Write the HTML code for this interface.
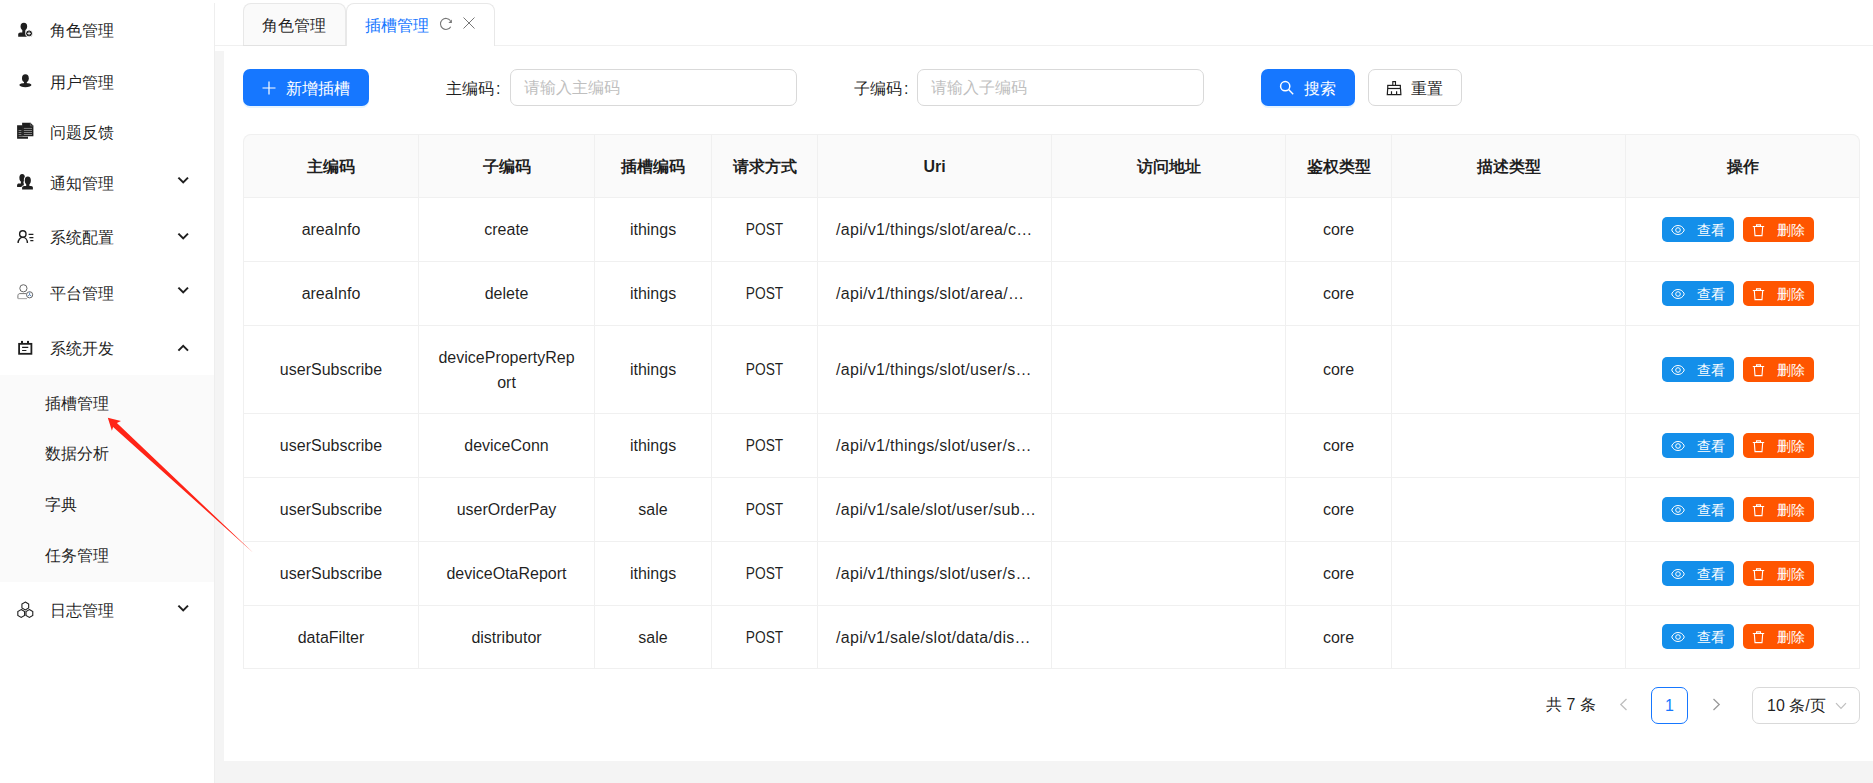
<!DOCTYPE html>
<html><head><meta charset="utf-8">
<style>
*{box-sizing:border-box;margin:0;padding:0}
html,body{width:1873px;height:783px;overflow:hidden;background:#fff;font-family:"Liberation Sans",sans-serif;color:rgba(0,0,0,.88)}
.abs{position:absolute}
#side{position:absolute;left:0;top:0;width:214px;height:783px;background:#fff}
#sbd{position:absolute;left:214px;top:3px;width:1px;height:780px;background:#eeeeee}
.mi{position:absolute;left:50px;font-size:16px;line-height:20px;white-space:nowrap}
.si{position:absolute;left:45px;font-size:16px;line-height:20px;white-space:nowrap}
#sub{position:absolute;left:0;top:375px;width:214px;height:207px;background:#fafafa}
#tabs{position:absolute;left:215px;top:0;width:1658px;height:46px;border-bottom:1px solid #f0f0f0;background:#fff}
.tab{position:absolute;top:3px;height:43px;border:1px solid #e8e8e8;border-bottom:none;border-radius:8px 8px 0 0;font-size:16px;line-height:20px;white-space:nowrap}
#gl{position:absolute;left:215px;top:51px;width:9px;height:732px;background:#f4f4f4}
#gb{position:absolute;left:215px;top:761px;width:1658px;height:22px;background:#f4f4f4}
.btn{position:absolute;border-radius:7px;font-size:16px;white-space:nowrap}
.inp{position:absolute;top:69px;height:37px;border:1px solid #d9d9d9;border-radius:7px;background:#fff}
.ph{position:absolute;left:13px;top:8px;font-size:16px;line-height:20px;color:#bfbfbf;white-space:nowrap}
.lbl{position:absolute;top:79px;font-size:16px;line-height:20px;white-space:nowrap}
.hl{position:absolute;height:1px;background:#f0f0f0}
.vl{position:absolute;width:1px;background:#f0f0f0}
.c{position:absolute;font-size:16px;line-height:20px;text-align:center;white-space:nowrap}
.h{font-weight:bold}
.vb{position:absolute;width:72px;height:25px;border-radius:5px;background:#148fea;color:#fff;font-size:14px}
.db{position:absolute;width:71px;height:25px;border-radius:5px;background:#ff5500;color:#fff;font-size:14px}

</style></head><body>
<div id="side"><div id="sub"></div>
<svg class="abs" style="left:14px;top:19px" width="22" height="22" viewBox="0 0 22 22">
<ellipse cx="9.85" cy="7.4" rx="3.3" ry="3.7" fill="#1f1f1f"/><rect x="8.3" y="9.5" width="3.1" height="4.5" fill="#1f1f1f"/>
<path d="M4.2 17.7V15.4C4.2 14.1 5 13.4 6.4 13.4H12.8V17.7Z" fill="#1f1f1f"/>
<circle cx="15.05" cy="14.4" r="3.5" fill="#1f1f1f" stroke="#fff" stroke-width="1"/>
<path d="M13.2 14.4h3.7M15.05 12.55v3.7" stroke="#fff" stroke-width=".9"/></svg>
<svg class="abs" style="left:14px;top:70px" width="22" height="22" viewBox="0 0 22 22">
<ellipse cx="11.4" cy="8.3" rx="3.4" ry="4.1" fill="#1f1f1f"/><rect x="10" y="11" width="2.8" height="3" fill="#1f1f1f"/>
<ellipse cx="11.4" cy="15.05" rx="6.05" ry="2.1" fill="#1f1f1f"/></svg>
<svg class="abs" style="left:14px;top:120px" width="22" height="22" viewBox="0 0 22 22">
<path d="M3.1 5.2H8.6V16.6H14V18.8H3.1Z" fill="#1f1f1f"/>
<path d="M8.1 2.8H16.5L19.4 5.7V16.3H8.1Z" fill="#1f1f1f"/>
<path d="M16.4 2.8V5.9H19.4" fill="none" stroke="#777" stroke-width=".7"/>
<path d="M9.8 8.4H18M9.8 10.5H18M9.8 12.5H18M9.8 14.5H18M4.6 10.5H7.4M4.6 12.5H7.4M4.6 14.5H7.4" stroke="#999" stroke-width=".8"/>
<path d="M4.6 16.45H14" stroke="#aaa" stroke-width=".6"/></svg>
<svg class="abs" style="left:14px;top:170px" width="22" height="22" viewBox="0 0 22 22">
<ellipse cx="8.15" cy="7.8" rx="2.8" ry="3.9" fill="#1f1f1f"/><rect x="6.9" y="10" width="2.6" height="4" fill="#1f1f1f"/>
<path d="M3.1 16.9V15.2C3.1 14.1 3.8 13.5 5 13.5H9.8V16.9Z" fill="#1f1f1f"/>
<path d="M7.4 20.1V17.6C7.4 16.2 8.4 15.3 10 15.3H11.3V13.5A4 4.6 0 1 1 16.3 13.5V15.3H16.6C18.3 15.3 19.5 16.2 19.5 17.6V20.1Z" fill="#fff"/>
<ellipse cx="13.8" cy="10.6" rx="3.05" ry="4" fill="#1f1f1f"/><rect x="12.2" y="13" width="3.2" height="3.5" fill="#1f1f1f"/>
<path d="M8.1 19.4V17.9C8.1 16.7 8.9 16 10.3 16H17C18.3 16 18.9 16.7 18.9 17.9V19.4Z" fill="#1f1f1f"/></svg>
<svg class="abs" style="left:14px;top:226px" width="22" height="22" viewBox="0 0 22 22">
<circle cx="8.8" cy="8" r="3.2" fill="none" stroke="#1f1f1f" stroke-width="1.4"/>
<path d="M4.1 17.1C4.1 13.6 6.2 11.4 8.75 11.4S13.4 13.6 13.4 17.1" fill="none" stroke="#1f1f1f" stroke-width="1.4"/>
<path d="M14.6 8.4H19.4M15.4 11.7H19.4M16.3 14.7H19.4" stroke="#1f1f1f" stroke-width="1.3"/></svg>
<svg class="abs" style="left:14px;top:281px" width="22" height="22" viewBox="0 0 22 22">
<circle cx="9.4" cy="7.3" r="3.6" fill="none" stroke="#666" stroke-width="1"/>
<path d="M12.3 12.6H6C4.7 12.6 3.9 13.4 3.9 14.7V17.5" fill="none" stroke="#777" stroke-width="1"/>
<path d="M3.9 17.6H13" stroke="#aaa" stroke-width="1.1"/>
<circle cx="15.6" cy="13.8" r="3.1" fill="none" stroke="#666" stroke-width="1"/>
<path d="M15.6 11.5v2.3M13.9 15l1.7-1.2 1.7 1.2" fill="none" stroke="#3a6fb0" stroke-width=".8"/></svg>
<svg class="abs" style="left:14px;top:337px" width="22" height="22" viewBox="0 0 22 22">
<rect x="5.1" y="6.85" width="12.3" height="9.95" fill="none" stroke="#1f1f1f" stroke-width="1.8"/>
<rect x="7" y="3.9" width="2" height="2.6" fill="#1f1f1f"/><rect x="13" y="3.9" width="2" height="2.6" fill="#1f1f1f"/>
<path d="M8.1 10.4H14.3M8.1 13.5H12.4" stroke="#1f1f1f" stroke-width="1.1"/></svg>
<svg class="abs" style="left:14px;top:598px" width="22" height="22" viewBox="0 0 22 22">
<path d="M11.30 4.10 L14.68 6.05 L14.68 9.95 L11.30 11.90 L7.92 9.95 L7.92 6.05ZM7.20 11.60 L10.58 13.55 L10.58 17.45 L7.20 19.40 L3.82 17.45 L3.82 13.55ZM15.40 11.60 L18.78 13.55 L18.78 17.45 L15.40 19.40 L12.02 17.45 L12.02 13.55Z" fill="none" stroke="#1f1f1f" stroke-width="1.1"/></svg>
<div class="mi" style="top:21.0px">角色管理</div>
<div class="mi" style="top:73.0px">用户管理</div>
<div class="mi" style="top:123.0px">问题反馈</div>
<div class="mi" style="top:173.5px">通知管理</div>
<div class="mi" style="top:228.3px">系统配置</div>
<div class="mi" style="top:283.7px">平台管理</div>
<div class="mi" style="top:339.3px">系统开发</div>
<div class="mi" style="top:601.0px">日志管理</div>
<div class="si" style="top:393.5px">插槽管理</div>
<div class="si" style="top:443.5px">数据分析</div>
<div class="si" style="top:495.0px">字典</div>
<div class="si" style="top:546.0px">任务管理</div>
<svg class="abs" style="left:177px;top:176.4px" width="12" height="8" viewBox="0 0 12 8"><path d="M1.4 1.6L6.2 6.4l4.8-4.8" fill="none" stroke="#1f1f1f" stroke-width="2"/></svg>
<svg class="abs" style="left:177px;top:231.6px" width="12" height="8" viewBox="0 0 12 8"><path d="M1.4 1.6L6.2 6.4l4.8-4.8" fill="none" stroke="#1f1f1f" stroke-width="2"/></svg>
<svg class="abs" style="left:177px;top:286.4px" width="12" height="8" viewBox="0 0 12 8"><path d="M1.4 1.6L6.2 6.4l4.8-4.8" fill="none" stroke="#1f1f1f" stroke-width="2"/></svg>
<svg class="abs" style="left:177px;top:343.8px" width="12" height="8" viewBox="0 0 12 8"><path d="M1.4 6.6L6.2 1.8l4.8 4.8" fill="none" stroke="#1f1f1f" stroke-width="2"/></svg>
<svg class="abs" style="left:177px;top:604.1px" width="12" height="8" viewBox="0 0 12 8"><path d="M1.4 1.6L6.2 6.4l4.8-4.8" fill="none" stroke="#1f1f1f" stroke-width="2"/></svg>
</div>
<div id="tabs"></div><div id="sbd"></div>
<div class="tab" style="left:243px;width:103px;height:42px;background:#fafafa"><span class="abs" style="left:18px;top:12px">角色管理</span></div>
<div class="abs" style="left:243px;top:45px;width:103px;height:1px;background:#e2e2e2"></div><div class="tab" style="left:346px;width:149px;background:#fff;height:43px;color:#1677ff"><span class="abs" style="left:18px;top:12px">插槽管理</span><svg class="abs" style="left:92px;top:13px" width="14" height="14" viewBox="0 0 14 14"><path d="M11.5 3.75A5.5 5.5 0 1 0 11.76 9.65" fill="none" stroke="#777" stroke-width="1.05"/><path d="M12.9 2.4V6H9.4z" fill="#777"/></svg><svg class="abs" style="left:115px;top:12px" width="14" height="14" viewBox="0 0 14 14"><path d="M1.5 1.5l11 11M12.5 1.5l-11 11" stroke="#777" stroke-width="1"/></svg></div>
<div id="gl"></div><div id="gb"></div>
<div class="btn" style="left:243px;top:69px;width:126px;height:37px;background:#1677ff;color:#fff;box-shadow:0 2px 0 rgba(5,145,255,.1)"><svg class="abs" style="left:19px;top:12px" width="14" height="14" viewBox="0 0 14 14"><path d="M7 .5v13M.5 7h13" stroke="#fff" stroke-width="1.2"/></svg><span class="abs" style="left:43px;top:10px;line-height:20px">新增插槽</span></div>
<div class="lbl" style="left:446px">主编码<span style="margin-left:2px">:</span></div>
<div class="inp" style="left:510px;width:287px"><span class="ph">请输入主编码</span></div>
<div class="lbl" style="left:854px">子编码<span style="margin-left:2px">:</span></div>
<div class="inp" style="left:917px;width:287px"><span class="ph">请输入子编码</span></div>
<div class="btn" style="left:1261px;top:69px;width:94px;height:37px;background:#1677ff;color:#fff;box-shadow:0 2px 0 rgba(5,145,255,.1)"><svg class="abs" style="left:18px;top:11px" width="15" height="15" viewBox="0 0 15 15"><circle cx="6.2" cy="6.2" r="4.6" fill="none" stroke="#fff" stroke-width="1.5"/><path d="M9.6 9.6l4.6 4.6" stroke="#fff" stroke-width="1.4"/></svg><span class="abs" style="left:43px;top:10px;line-height:20px">搜索</span></div>
<div class="btn" style="left:1368px;top:69px;width:94px;height:37px;background:#fff;border:1px solid #d9d9d9"><svg class="abs" style="left:17px;top:11px" width="16" height="15" viewBox="0 0 16 15"><path d="M6.8 4.3V.6H9.5V4.3" fill="none" stroke="#1f1f1f" stroke-width="1.1"/><rect x="1.75" y="4.4" width="12.6" height="3.1" fill="none" stroke="#1f1f1f" stroke-width="1.2"/><path d="M1.7 7.5L1.3 13.6H14.9L14.5 7.5M5.5 13.6V10.2M10.6 13.6V10.2" fill="none" stroke="#1f1f1f" stroke-width="1.2"/></svg><span class="abs" style="left:42px;top:9px;line-height:20px">重置</span></div>
<div id="tblbg" class="abs" style="left:243px;top:134px;width:1617px;height:63px;background:#fafafa;border-radius:8px 8px 0 0"></div>
<div class="abs" style="left:243px;top:134px;width:1617px;height:535px;border:1px solid #f0f0f0;border-bottom:none;border-radius:8px 8px 0 0"></div>
<div class="hl" style="left:243px;top:197px;width:1617px"></div>
<div class="hl" style="left:243px;top:261px;width:1617px"></div>
<div class="hl" style="left:243px;top:325px;width:1617px"></div>
<div class="hl" style="left:243px;top:413px;width:1617px"></div>
<div class="hl" style="left:243px;top:477px;width:1617px"></div>
<div class="hl" style="left:243px;top:541px;width:1617px"></div>
<div class="hl" style="left:243px;top:605px;width:1617px"></div>
<div class="hl" style="left:243px;top:668px;width:1617px"></div>
<div class="vl" style="left:418px;top:134px;height:535px"></div>
<div class="vl" style="left:594px;top:134px;height:535px"></div>
<div class="vl" style="left:711px;top:134px;height:535px"></div>
<div class="vl" style="left:817px;top:134px;height:535px"></div>
<div class="vl" style="left:1051px;top:134px;height:535px"></div>
<div class="vl" style="left:1285px;top:134px;height:535px"></div>
<div class="vl" style="left:1391px;top:134px;height:535px"></div>
<div class="vl" style="left:1625px;top:134px;height:535px"></div>
<div class="c h" style="left:244px;width:174px;top:157.0px;line-height:20px">主编码</div>
<div class="c h" style="left:419px;width:175px;top:157.0px;line-height:20px">子编码</div>
<div class="c h" style="left:595px;width:116px;top:157.0px;line-height:20px">插槽编码</div>
<div class="c h" style="left:712px;width:105px;top:157.0px;line-height:20px">请求方式</div>
<div class="c h" style="left:818px;width:233px;top:157.0px;line-height:20px">Uri</div>
<div class="c h" style="left:1052px;width:233px;top:157.0px;line-height:20px">访问地址</div>
<div class="c h" style="left:1286px;width:105px;top:157.0px;line-height:20px">鉴权类型</div>
<div class="c h" style="left:1392px;width:233px;top:157.0px;line-height:20px">描述类型</div>
<div class="c h" style="left:1626px;width:233px;top:157.0px;line-height:20px">操作</div>
<div class="c" style="left:244px;width:174px;top:219.5px;line-height:20px">areaInfo</div>
<div class="c" style="left:419px;width:175px;top:219.5px;line-height:20px">create</div>
<div class="c" style="left:595px;width:116px;top:219.5px;line-height:20px">ithings</div>
<div class="c" style="left:712px;width:105px;top:219.5px;transform:scaleX(.86)">POST</div>
<div class="c" style="left:836px;top:219.5px;text-align:left;letter-spacing:.3px">/api/v1/things/slot/area/c…</div>
<div class="c" style="left:1286px;width:105px;top:219.5px;line-height:20px">core</div>
<div class="vb" style="left:1662px;top:217.0px"><svg class="abs" style="left:9px;top:6px" width="14" height="13" viewBox="0 0 14 13"><path d="M.7 7C1.9 3.9 4.3 2.5 7 2.5s5.1 1.4 6.3 4.5c-1.2 3.1-3.6 4.5-6.3 4.5S1.9 10.1.7 7z" fill="none" stroke="#fff" stroke-width="1"/><circle cx="7" cy="7" r="2.3" fill="none" stroke="#fff" stroke-width="1"/></svg><span class="abs" style="left:35px;top:4px;line-height:18px">查看</span></div>
<div class="db" style="left:1743px;top:217.0px"><svg class="abs" style="left:9px;top:7px" width="13" height="13" viewBox="0 0 13 13"><path d="M.8 2.5h11.4M4.5 2.5V.9h4v1.6M2.3 2.5l.7 9.1h7l.7-9.1" fill="none" stroke="#fff" stroke-width="1.1"/></svg><span class="abs" style="left:34px;top:4px;line-height:18px">删除</span></div>
<div class="c" style="left:244px;width:174px;top:283.5px;line-height:20px">areaInfo</div>
<div class="c" style="left:419px;width:175px;top:283.5px;line-height:20px">delete</div>
<div class="c" style="left:595px;width:116px;top:283.5px;line-height:20px">ithings</div>
<div class="c" style="left:712px;width:105px;top:283.5px;transform:scaleX(.86)">POST</div>
<div class="c" style="left:836px;top:283.5px;text-align:left;letter-spacing:.3px">/api/v1/things/slot/area/…</div>
<div class="c" style="left:1286px;width:105px;top:283.5px;line-height:20px">core</div>
<div class="vb" style="left:1662px;top:281.0px"><svg class="abs" style="left:9px;top:6px" width="14" height="13" viewBox="0 0 14 13"><path d="M.7 7C1.9 3.9 4.3 2.5 7 2.5s5.1 1.4 6.3 4.5c-1.2 3.1-3.6 4.5-6.3 4.5S1.9 10.1.7 7z" fill="none" stroke="#fff" stroke-width="1"/><circle cx="7" cy="7" r="2.3" fill="none" stroke="#fff" stroke-width="1"/></svg><span class="abs" style="left:35px;top:4px;line-height:18px">查看</span></div>
<div class="db" style="left:1743px;top:281.0px"><svg class="abs" style="left:9px;top:7px" width="13" height="13" viewBox="0 0 13 13"><path d="M.8 2.5h11.4M4.5 2.5V.9h4v1.6M2.3 2.5l.7 9.1h7l.7-9.1" fill="none" stroke="#fff" stroke-width="1.1"/></svg><span class="abs" style="left:34px;top:4px;line-height:18px">删除</span></div>
<div class="c" style="left:244px;width:174px;top:359.5px;line-height:20px">userSubscribe</div>
<div class="c" style="left:419px;width:175px;top:344.5px;line-height:25px">devicePropertyRep<br>ort</div>
<div class="c" style="left:595px;width:116px;top:359.5px;line-height:20px">ithings</div>
<div class="c" style="left:712px;width:105px;top:359.5px;transform:scaleX(.86)">POST</div>
<div class="c" style="left:836px;top:359.5px;text-align:left;letter-spacing:.3px">/api/v1/things/slot/user/s…</div>
<div class="c" style="left:1286px;width:105px;top:359.5px;line-height:20px">core</div>
<div class="vb" style="left:1662px;top:357.0px"><svg class="abs" style="left:9px;top:6px" width="14" height="13" viewBox="0 0 14 13"><path d="M.7 7C1.9 3.9 4.3 2.5 7 2.5s5.1 1.4 6.3 4.5c-1.2 3.1-3.6 4.5-6.3 4.5S1.9 10.1.7 7z" fill="none" stroke="#fff" stroke-width="1"/><circle cx="7" cy="7" r="2.3" fill="none" stroke="#fff" stroke-width="1"/></svg><span class="abs" style="left:35px;top:4px;line-height:18px">查看</span></div>
<div class="db" style="left:1743px;top:357.0px"><svg class="abs" style="left:9px;top:7px" width="13" height="13" viewBox="0 0 13 13"><path d="M.8 2.5h11.4M4.5 2.5V.9h4v1.6M2.3 2.5l.7 9.1h7l.7-9.1" fill="none" stroke="#fff" stroke-width="1.1"/></svg><span class="abs" style="left:34px;top:4px;line-height:18px">删除</span></div>
<div class="c" style="left:244px;width:174px;top:435.5px;line-height:20px">userSubscribe</div>
<div class="c" style="left:419px;width:175px;top:435.5px;line-height:20px">deviceConn</div>
<div class="c" style="left:595px;width:116px;top:435.5px;line-height:20px">ithings</div>
<div class="c" style="left:712px;width:105px;top:435.5px;transform:scaleX(.86)">POST</div>
<div class="c" style="left:836px;top:435.5px;text-align:left;letter-spacing:.3px">/api/v1/things/slot/user/s…</div>
<div class="c" style="left:1286px;width:105px;top:435.5px;line-height:20px">core</div>
<div class="vb" style="left:1662px;top:433.0px"><svg class="abs" style="left:9px;top:6px" width="14" height="13" viewBox="0 0 14 13"><path d="M.7 7C1.9 3.9 4.3 2.5 7 2.5s5.1 1.4 6.3 4.5c-1.2 3.1-3.6 4.5-6.3 4.5S1.9 10.1.7 7z" fill="none" stroke="#fff" stroke-width="1"/><circle cx="7" cy="7" r="2.3" fill="none" stroke="#fff" stroke-width="1"/></svg><span class="abs" style="left:35px;top:4px;line-height:18px">查看</span></div>
<div class="db" style="left:1743px;top:433.0px"><svg class="abs" style="left:9px;top:7px" width="13" height="13" viewBox="0 0 13 13"><path d="M.8 2.5h11.4M4.5 2.5V.9h4v1.6M2.3 2.5l.7 9.1h7l.7-9.1" fill="none" stroke="#fff" stroke-width="1.1"/></svg><span class="abs" style="left:34px;top:4px;line-height:18px">删除</span></div>
<div class="c" style="left:244px;width:174px;top:499.5px;line-height:20px">userSubscribe</div>
<div class="c" style="left:419px;width:175px;top:499.5px;line-height:20px">userOrderPay</div>
<div class="c" style="left:595px;width:116px;top:499.5px;line-height:20px">sale</div>
<div class="c" style="left:712px;width:105px;top:499.5px;transform:scaleX(.86)">POST</div>
<div class="c" style="left:836px;top:499.5px;text-align:left;letter-spacing:.3px">/api/v1/sale/slot/user/sub…</div>
<div class="c" style="left:1286px;width:105px;top:499.5px;line-height:20px">core</div>
<div class="vb" style="left:1662px;top:497.0px"><svg class="abs" style="left:9px;top:6px" width="14" height="13" viewBox="0 0 14 13"><path d="M.7 7C1.9 3.9 4.3 2.5 7 2.5s5.1 1.4 6.3 4.5c-1.2 3.1-3.6 4.5-6.3 4.5S1.9 10.1.7 7z" fill="none" stroke="#fff" stroke-width="1"/><circle cx="7" cy="7" r="2.3" fill="none" stroke="#fff" stroke-width="1"/></svg><span class="abs" style="left:35px;top:4px;line-height:18px">查看</span></div>
<div class="db" style="left:1743px;top:497.0px"><svg class="abs" style="left:9px;top:7px" width="13" height="13" viewBox="0 0 13 13"><path d="M.8 2.5h11.4M4.5 2.5V.9h4v1.6M2.3 2.5l.7 9.1h7l.7-9.1" fill="none" stroke="#fff" stroke-width="1.1"/></svg><span class="abs" style="left:34px;top:4px;line-height:18px">删除</span></div>
<div class="c" style="left:244px;width:174px;top:563.5px;line-height:20px">userSubscribe</div>
<div class="c" style="left:419px;width:175px;top:563.5px;line-height:20px">deviceOtaReport</div>
<div class="c" style="left:595px;width:116px;top:563.5px;line-height:20px">ithings</div>
<div class="c" style="left:712px;width:105px;top:563.5px;transform:scaleX(.86)">POST</div>
<div class="c" style="left:836px;top:563.5px;text-align:left;letter-spacing:.3px">/api/v1/things/slot/user/s…</div>
<div class="c" style="left:1286px;width:105px;top:563.5px;line-height:20px">core</div>
<div class="vb" style="left:1662px;top:561.0px"><svg class="abs" style="left:9px;top:6px" width="14" height="13" viewBox="0 0 14 13"><path d="M.7 7C1.9 3.9 4.3 2.5 7 2.5s5.1 1.4 6.3 4.5c-1.2 3.1-3.6 4.5-6.3 4.5S1.9 10.1.7 7z" fill="none" stroke="#fff" stroke-width="1"/><circle cx="7" cy="7" r="2.3" fill="none" stroke="#fff" stroke-width="1"/></svg><span class="abs" style="left:35px;top:4px;line-height:18px">查看</span></div>
<div class="db" style="left:1743px;top:561.0px"><svg class="abs" style="left:9px;top:7px" width="13" height="13" viewBox="0 0 13 13"><path d="M.8 2.5h11.4M4.5 2.5V.9h4v1.6M2.3 2.5l.7 9.1h7l.7-9.1" fill="none" stroke="#fff" stroke-width="1.1"/></svg><span class="abs" style="left:34px;top:4px;line-height:18px">删除</span></div>
<div class="c" style="left:244px;width:174px;top:628.0px;line-height:20px">dataFilter</div>
<div class="c" style="left:419px;width:175px;top:628.0px;line-height:20px">distributor</div>
<div class="c" style="left:595px;width:116px;top:628.0px;line-height:20px">sale</div>
<div class="c" style="left:712px;width:105px;top:628.0px;transform:scaleX(.86)">POST</div>
<div class="c" style="left:836px;top:628.0px;text-align:left;letter-spacing:.3px">/api/v1/sale/slot/data/dis…</div>
<div class="c" style="left:1286px;width:105px;top:628.0px;line-height:20px">core</div>
<div class="vb" style="left:1662px;top:624.0px"><svg class="abs" style="left:9px;top:6px" width="14" height="13" viewBox="0 0 14 13"><path d="M.7 7C1.9 3.9 4.3 2.5 7 2.5s5.1 1.4 6.3 4.5c-1.2 3.1-3.6 4.5-6.3 4.5S1.9 10.1.7 7z" fill="none" stroke="#fff" stroke-width="1"/><circle cx="7" cy="7" r="2.3" fill="none" stroke="#fff" stroke-width="1"/></svg><span class="abs" style="left:35px;top:4px;line-height:18px">查看</span></div>
<div class="db" style="left:1743px;top:624.0px"><svg class="abs" style="left:9px;top:7px" width="13" height="13" viewBox="0 0 13 13"><path d="M.8 2.5h11.4M4.5 2.5V.9h4v1.6M2.3 2.5l.7 9.1h7l.7-9.1" fill="none" stroke="#fff" stroke-width="1.1"/></svg><span class="abs" style="left:34px;top:4px;line-height:18px">删除</span></div>
<div class="abs" style="left:1546px;top:695px;font-size:16px;line-height:20px;white-space:nowrap">共 7 条</div>
<svg class="abs" style="left:1619px;top:698px" width="9" height="13" viewBox="0 0 9 13"><path d="M7.5 1L1.8 6.5 7.5 12" fill="none" stroke="#bfbfbf" stroke-width="1.3"/></svg>
<div class="abs" style="left:1651px;top:687px;width:37px;height:37px;border:1px solid #1677ff;border-radius:7px;color:#1677ff;font-size:16px;line-height:35px;text-align:center">1</div>
<svg class="abs" style="left:1712px;top:698px" width="9" height="13" viewBox="0 0 9 13"><path d="M1.5 1l5.7 5.5L1.5 12" fill="none" stroke="#999" stroke-width="1.3"/></svg>
<div class="abs" style="left:1752px;top:687px;width:108px;height:37px;border:1px solid #d9d9d9;border-radius:7px;font-size:16px"><span class="abs" style="left:14px;top:8px;line-height:20px;white-space:nowrap">10 条/页</span><svg class="abs" style="left:82px;top:14px" width="12" height="8" viewBox="0 0 12 8"><path d="M1 1.2l5 5.3 5-5.3" fill="none" stroke="#bfbfbf" stroke-width="1.2"/></svg></div>
<svg class="abs" style="left:0;top:0" width="300" height="600" viewBox="0 0 300 600"><path d="M107.8 417.8L121 421.1 116.9 423.1 253.5 553 113.1 427 111.9 430.8z" fill="#ff2417"/></svg>
</body></html>
